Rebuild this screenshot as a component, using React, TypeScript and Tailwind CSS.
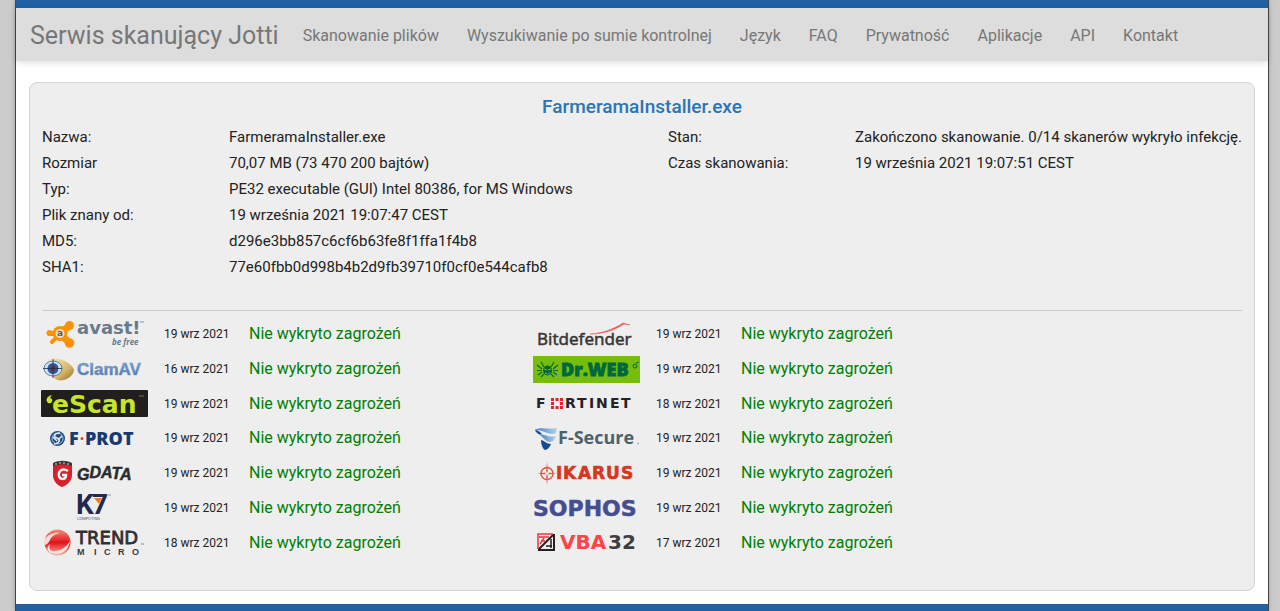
import type { ReactNode } from 'react';

const navLinks = ['Skanowanie plików', 'Wyszukiwanie po sumie kontrolnej', 'Język', 'FAQ', 'Prywatność', 'Aplikacje', 'API', 'Kontakt'];

const fileInfo = [
  ['Nazwa:', 'FarmeramaInstaller.exe'],
  ['Rozmiar', '70,07 MB (73 470 200 bajtów)'],
  ['Typ:', 'PE32 executable (GUI) Intel 80386, for MS Windows'],
  ['Plik znany od:', '19 września 2021 19:07:47 CEST'],
  ['MD5:', 'd296e3bb857c6cf6b63fe8f1ffa1f4b8'],
  ['SHA1:', '77e60fbb0d998b4b2d9fb39710f0cf0e544cafb8']
];

const scanInfo = [
  ['Stan:', 'Zakończono skanowanie. 0/14 skanerów wykryło infekcję.'],
  ['Czas skanowania:', '19 września 2021 19:07:51 CEST']
];

const Logo = ({ label, children }: { label: string; children: ReactNode }) => (
  <svg viewBox="0 0 107 27" className="block h-[27px] w-[107px] overflow-visible" role="img" aria-label={label}>
    {children}
  </svg>
);

const AvastLogo = () => (
  <Logo label="avast!">
    <g fill="none" stroke="#ff9100" strokeLinecap="round">
      <path d="M9 12.500h8" strokeWidth="5" />
      <path d="M19 12.500L28 5M19 13l9 8.500" strokeWidth="7" />
      <path d="M14 18l-3 3" strokeWidth="4" />
    </g>
    <g fill="#ff9100">
      <circle cx="19" cy="12.500" r="7.500" />
      <circle cx="28.500" cy="4.500" r="4.500" />
      <circle cx="28.500" cy="22" r="4.800" />
      <circle cx="8.500" cy="12" r="3" />
    </g>
    <circle cx="19" cy="12.500" r="4.500" fill="#eedfc4" />
    <text x="16" y="15" className="font-['DejaVu_Sans'] text-[9px] font-bold" fill="#5f5a57">a</text>
    <text x="36" y="13" className="font-['DejaVu_Sans'] text-[18px] font-bold" fill="#68798a">avast!</text>
    <text x="71" y="24" className="font-['Open_Sans'] text-[8px] font-bold italic" fill="#68798a">be free</text>
    <path d="M99 1h4" stroke="#8896a3" />
  </Logo>
);

const ClamLogo = () => (
  <Logo label="ClamAV">
    <defs>
      <linearGradient id="clam-shell" x1="0" y1="0" x2="1" y2="1">
        <stop offset="0" stopColor="#f7ecc0" />
        <stop offset="0.6" stopColor="#d8b765" />
        <stop offset="1" stopColor="#8b6c2d" />
      </linearGradient>
      <linearGradient id="clam-text" x1="0" y1="0" x2="0" y2="1">
        <stop offset="0" stopColor="#79aee2" />
        <stop offset="1" stopColor="#3f6fae" />
      </linearGradient>
    </defs>
    <path d="M7 4C17-1 32 8 33 14c-1 7-10 12-17 10C10 21 6 12 7 4z" fill="url(#clam-shell)" />
    <ellipse cx="12" cy="12.500" rx="9" ry="7.500" fill="#d7e2ef" stroke="#527aa9" />
    <circle cx="12" cy="12.500" r="5.500" fill="#2f5b9b" />
    <circle cx="12" cy="12.500" r="2.500" fill="#a5182b" />
    <path d="M2 12.500h19M12 3v19" stroke="#17305c" strokeWidth="0.800" />
    <text x="36" y="19" className="font-['Liberation_Sans'] text-[17px] font-bold" fill="url(#clam-text)" stroke="#7d93ad" strokeWidth="0.500">
      ClamAV
    </text>
  </Logo>
);

const EscanLogo = () => (
  <Logo label="eScan">
    <rect width="107" height="27" rx="1" fill="#211e1e" />
    <path d="M11 5C6 6 4 10 7 13c3 1 5-1 4-4l-2-1z" fill="#c9e52b" />
    <text x="11" y="23" className="font-['DejaVu_Sans'] text-[25px] font-bold" fill="#c9e52b">eScan</text>
    <path d="M98 6h5" stroke="#73753d" />
  </Logo>
);

const FprotLogo = () => (
  <Logo label="F-PROT">
    <circle cx="16.500" cy="13.500" r="7.500" fill="#1f4a83" />
    <circle cx="16.500" cy="13.500" r="5.500" fill="none" stroke="#b8cadd" />
    <path d="M19 8c-6 0-7 4-3 5s3 5-3 6M21 11l-4 4M12 12l4 4" fill="none" stroke="#e2eaf2" strokeWidth="1.500" />
    <text x="28" y="20" className="font-['Open_Sans'] text-[18px] font-extrabold" fill="#163b70">F</text>
    <circle cx="41" cy="13.500" r="1.500" fill="#e0442c" />
    <text x="44" y="20" className="font-['Open_Sans'] text-[18px] font-extrabold" fill="#163b70">PROT</text>
  </Logo>
);

const GdataLogo = () => (
  <Logo label="G DATA">
    <path d="M12 5c6-2 13-2 19 0v10c0 6-5 10-10 12-5-2-9-6-9-12z" fill="#d91f2a" />
    <path d="M12 3c6-3 13-3 19 0v3c-6-2-13-2-19 0z" fill="#3c3438" />
    <path d="M14 4h2m2-1h2m2 0h2m2 1h2" stroke="#ddd" />
    <path d="M27 11c-5-3-10-1-9 5 1 4 7 4 7-1h-4" fill="none" stroke="#fff" strokeWidth="2.500" />
    <text x="36" y="20" className="font-['Liberation_Sans'] text-[16px] font-bold italic" fill="#2b2b2d" stroke="#2b2b2d" strokeWidth="0.500">
      G<tspan dy="-2">DA</tspan><tspan dy="1">T</tspan><tspan dy="1">A</tspan>
    </text>
  </Logo>
);

const K7Logo = () => (
  <Logo label="K7 Computing">
    <text x="35 51" y="20" className="font-['Roboto'] text-[28px] font-bold" fill="#23284f">K7</text>
    <path d="M53 4h8l-3 6z" fill="#f47b2a" />
    <path d="M66 1h4" stroke="#999ab0" />
    <text x="36" y="26" className="font-['Roboto'] text-[4px]" fill="#55597c">COMPUTING</text>
  </Logo>
);

const TrendLogo = () => (
  <Logo label="Trend Micro">
    <defs>
      <linearGradient id="trend-ball" x1="0" y1="0" x2="0" y2="1">
        <stop offset="0" stopColor="#f58c76" />
        <stop offset="0.5" stopColor="#e3121b" />
        <stop offset="1" stopColor="#f7b5a2" />
      </linearGradient>
    </defs>
    <circle cx="16.500" cy="13.500" r="13" fill="url(#trend-ball)" />
    <path d="M3 11C7 5 13 3 19 4c-5 1-8 3-10 7-1 3-4 5-6 5z" fill="#f8dad3" />
    <path d="M9 15c-2 6 1 8 6 7 7-1 11-5 14-10-1 7-6 13-13 13S3 21 9 15z" fill="#f8e4df" />
    <text x="35" y="15" className="font-['DejaVu_Sans'] text-[18px]" fill="#303033" stroke="#303033" strokeWidth="0.800">TREND</text>
    <text x="36 53 63 77 91" y="26" className="font-['Liberation_Sans'] text-[9px] font-bold" fill="#38383b">MICRO</text>
    <path d="M100 15h3" stroke="#888" />
  </Logo>
);

const BitdefenderLogo = () => (
  <Logo label="Bitdefender">
    <path d="M57 13c13-1 24-5 33-11l7 2-6-1C82 9 71 13 57 13z" fill="#e9565a" stroke="#e9565a" strokeWidth="0.500" />
    <text x="4" y="24" className="font-['Noto_Sans'] text-[17px]" fill="#3b3536" stroke="#3b3536" strokeWidth="0.500">Bitdefender</text>
  </Logo>
);

const DrWebLogo = () => (
  <Logo label="Dr.WEB">
    <rect width="107" height="27" fill="#76bd0d" />
    <path
      d="M11 11L8 6M9 13L4 9M9 14.500H4M9 16l-4 3M11 18l-3 3M18 11l3-5M20 13l5-4M20 14.500h5M20 16l4 3M18 18l3 3"
      stroke="#00683c"
      strokeWidth="1.200"
    />
    <ellipse cx="14.500" cy="14.500" rx="4.500" ry="5" fill="#00683c" />
    <path d="M11 13l3 1M18 13l-3 1M12 17l2.500 1 2.500-1" stroke="#76bd0d" />
    <text x="28" y="20" className="font-['Open_Sans'] text-[18px] font-extrabold" fill="#00683c" stroke="#00683c" strokeWidth="0.800">
      Dr.WEB
    </text>
    <circle cx="102" cy="10" r="2" fill="none" stroke="#00683c" />
    <path d="M103 7l3-1" stroke="#00683c" />
  </Logo>
);

const FortinetLogo = () => (
  <Logo label="Fortinet">
    <path d="M18 8h3v3h-3zM22.500 8h3v3h-3zM27 8h3v3h-3zM18 12h3v3h-3zM27 12h3v3h-3zM18 16h3v3h-3zM22.500 16h3v3h-3zM27 16h3v3h-3z" fill="#e52321" />
    <text x="3 32 44 56 63 77 88" y="18" className="font-['DejaVu_Sans'] text-[14px] font-bold" fill="#242224">FRTINET</text>
  </Logo>
);

const FSecureLogo = () => (
  <Logo label="F-Secure">
    <defs>
      <linearGradient id="fsecure-mark" x1="0" y1="0" x2="1" y2="0">
        <stop offset="0" stopColor="#3f7dc0" />
        <stop offset="1" stopColor="#b5d0ea" />
      </linearGradient>
    </defs>
    <path d="M1 5C7 1 16 5 24 3c0 3-1 6-4 6C12 9 8 4 1 5z" fill="url(#fsecure-mark)" />
    <path d="M5 9c7 0 11 4 18 2-1 3-3 6-6 6-5 0-7-6-12-8z" fill="url(#fsecure-mark)" />
    <path d="M2 5c3 0 5 2 7 4-3 1-6-1-7-4z" fill="#184f96" />
    <path d="M8 15c3 0 5 4 10 4-1 3-4 6-6 6-2-1-4-5-4-10z" fill="#144b91" />
    <text x="25" y="19" className="font-['Open_Sans'] text-[18px] font-bold" fill="#4b616d">F-Secure</text>
    <circle cx="105" cy="18.500" r="1" fill="#9fb3c0" />
  </Logo>
);

const IkarusLogo = () => (
  <Logo label="IKARUS">
    <circle cx="14" cy="13.500" r="6" fill="none" stroke="#dc5a43" strokeWidth="1.500" />
    <path d="M14 2l1 10.500 9 1-9 1L14 25l-1-10.500-9-1 9-1z" fill="#dc5a43" />
    <circle cx="14" cy="13.500" r="2" fill="#f1d8d3" />
    <text x="23 30 45 59 73 88" y="19" className="font-['DejaVu_Sans'] text-[17px] font-bold" fill="#da351c" stroke="#da351c" strokeWidth="0.600">
      IKARUS
    </text>
  </Logo>
);

const SophosLogo = () => (
  <Logo label="SOPHOS">
    <text x="0" y="22" className="font-['DejaVu_Sans'] text-[22px] font-bold" fill="#444e91" stroke="#444e91" strokeWidth="0.500">SOPHOS</text>
  </Logo>
);

const VbaLogo = () => (
  <Logo label="VBA32">
    <path d="M5 20V5h15" fill="none" stroke="#e5393b" strokeWidth="1.500" />
    <path d="M21 5v16H5" fill="none" stroke="#222" strokeWidth="2" />
    <path d="M6 20L20 6" stroke="#222" strokeWidth="2" />
    <path d="M6 8h10M7 15l4-6M8 12h4" fill="none" stroke="#e5393b" strokeWidth="1.500" />
    <path d="M18 10v9M13 17h6" stroke="#222" strokeWidth="1.500" />
    <text y="20" className="font-['DejaVu_Sans'] text-[20px] font-bold">
      <tspan x="27" fill="#fb4548">VBA</tspan>
      <tspan x="75" fill="#403d40">32</tspan>
    </text>
  </Logo>
);

const leftScanners = [
  { logo: <AvastLogo />, date: '19 wrz 2021' },
  { logo: <ClamLogo />, date: '16 wrz 2021' },
  { logo: <EscanLogo />, date: '19 wrz 2021' },
  { logo: <FprotLogo />, date: '19 wrz 2021' },
  { logo: <GdataLogo />, date: '19 wrz 2021' },
  { logo: <K7Logo />, date: '19 wrz 2021' },
  { logo: <TrendLogo />, date: '18 wrz 2021' }
];

const rightScanners = [
  { logo: <BitdefenderLogo />, date: '19 wrz 2021' },
  { logo: <DrWebLogo />, date: '19 wrz 2021' },
  { logo: <FortinetLogo />, date: '18 wrz 2021' },
  { logo: <FSecureLogo />, date: '19 wrz 2021' },
  { logo: <IkarusLogo />, date: '19 wrz 2021' },
  { logo: <SophosLogo />, date: '19 wrz 2021' },
  { logo: <VbaLogo />, date: '17 wrz 2021' }
];

const InfoList = ({ items }: { items: string[][] }) => (
  <dl>
    {items.map(([label, value]) => (
      <div key={label} className="flex h-[26px] items-center">
        <dt className="w-[187px] shrink-0">{label}</dt>
        <dd className="whitespace-nowrap">{value}</dd>
      </div>
    ))}
  </dl>
);

const ScannerTable = ({ scanners }: { scanners: typeof leftScanners }) => (
  <table className="h-[243px] w-[492px]">
    <tbody>
      {scanners.map((scanner, ind) => (
        <tr key={ind}>
          <td className="w-[123px] p-0">{scanner.logo}</td>
          <td className="w-[85px] p-0 text-[12px]">{scanner.date}</td>
          <td className="p-0 text-[16px] text-[#008000]">Nie wykryto zagrożeń</td>
        </tr>
      ))}
    </tbody>
  </table>
);

export default function App() {
  return (
    <div className="bg-[#cbcbcb] pr-[11px] pl-[15px] font-['Roboto',sans-serif] text-[15px] text-[#222]">
      <div className="min-h-screen border-x border-[#444] bg-white shadow-[0_0_4px_#999]">
        <div className="h-2 bg-[#2161a3]" />
        <nav className="flex h-[53px] items-center bg-[#ddd] pt-[2px] pl-[14px] text-[16px] text-[#777] shadow-[0_2px_6px_rgba(0,0,0,0.12)]">
          <a href="#" className="text-[25px]">
            Serwis skanujący Jotti
          </a>
          <div className="ml-6 flex gap-7">
            {navLinks.map(link => (
              <a key={link} href="#">
                {link}
              </a>
            ))}
          </div>
        </nav>
        <main className="px-[13px] pt-[21px] pb-[13px]">
          <section className="rounded-lg border border-[#d3d3d3] bg-[#eee] px-3 pt-[11px] pb-[30px]">
            <h1 className="text-center text-[19px] leading-[26px] font-medium text-[#2a75b5]">FarmeramaInstaller.exe</h1>
            <div className="mt-1 grid grid-cols-[626fr_574fr]">
              <InfoList items={fileInfo} />
              <InfoList items={scanInfo} />
            </div>
            <hr className="mt-[30px] mb-[6px] border-[#ccc]" />
            <div className="-ml-px flex">
              <ScannerTable scanners={leftScanners} />
              <ScannerTable scanners={rightScanners} />
            </div>
          </section>
        </main>
        <footer className="h-[7px] bg-[#2161a3]" />
      </div>
    </div>
  );
}
